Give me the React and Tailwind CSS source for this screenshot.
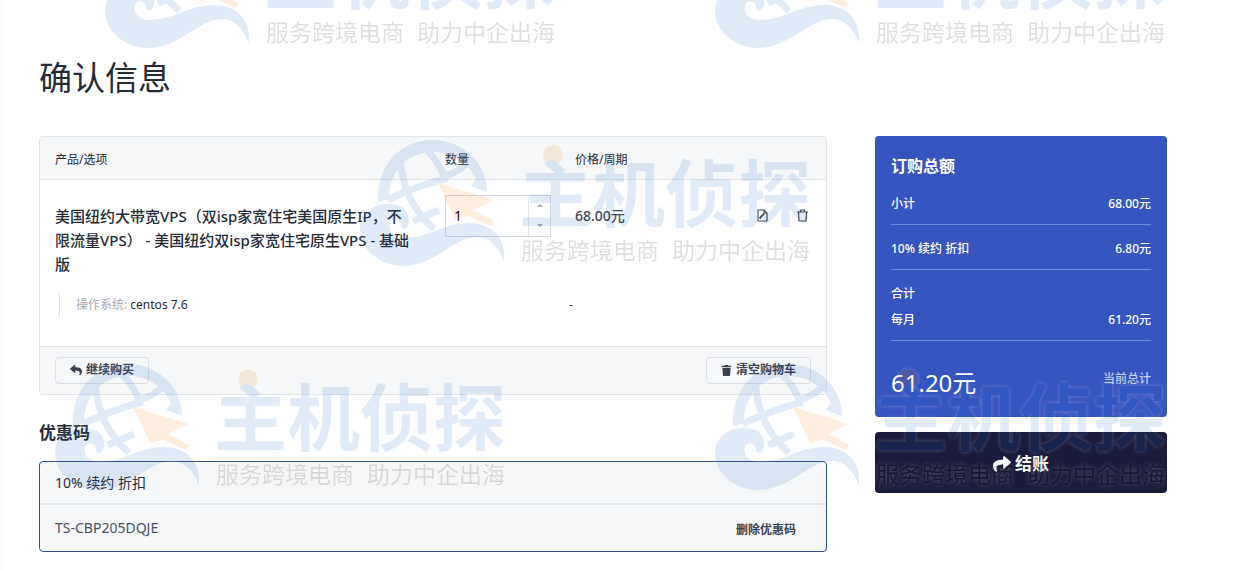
import { useState } from "react";
import { FaReply, FaShare, FaTrash } from "react-icons/fa";

const options = [{ label: "操作系统:", value: "centos 7.6", price: "-" }];

// top left corner of every repeated brand mark
const marks = [
	[100, -78],
	[710, -78],
	[355, 140],
	[50, 364],
	[710, 364],
];

function BrandMark({ x, y }) {
	return (
		<g transform={`translate(${x} ${y})`} filter="url(#mark)">
			<path
				d="M19 62C17 27 40 0 73 0C104 0 128 23 128 52L112 46L117 39C109 22 94 12 74 12C47 12 30 33 30 59Z"
				fill="#1468c8"
			/>
			<path
				d="M41 17C43 48 54 70 75 89M29 60C46 51 72 42 89 38M67 9C77 19 83 28 86 40M86 36C96 33 104 28 110 21M54 81L80 70"
				fill="none"
				stroke="#1468c8"
				strokeWidth="7"
			/>
			<path
				d="M50 83C52 70 42 64 29 64C12 64 1 75 1 89C1 110 22 126 44 126C76 126 95 97 118 97C131 97 139 107 145 121C147 98 133 83 110 83C84 83 70 98 46 98C34 98 29 90 31 83C33 78 40 78 42 84C41 90 48 91 50 83Z"
				fill="#1468c8"
			/>
			<path d="M79 43L135 60L114 70L135 81L132 86L109 76L96 79Z" fill="#f87c10" />
			<circle cx="194" cy="15" r="10" fill="#f87c10" />
			<text x="160" y="81" fontSize="73" fontWeight="700" fill="#1468c8">
				主机侦探
			</text>
			<text x="162" y="119" fontSize="23" fill="#000000">
				服务跨境电商
			</text>
			<text x="313" y="119" fontSize="23" fill="#000000">
				助力中企出海
			</text>
		</g>
	);
}

function Watermark() {
	return (
		<svg
			aria-hidden="true"
			className="pointer-events-none absolute inset-0 h-full w-full">
			<defs>
				{/* faint fill with a white glow that stays outside the shapes */}
				<filter id="mark" colorInterpolationFilters="sRGB">
					<feGaussianBlur in="SourceAlpha" stdDeviation="2" result="blurred" />
					<feFlood floodColor="#ffffff" floodOpacity="0.28" />
					<feComposite in2="blurred" operator="in" />
					<feComposite in2="SourceAlpha" operator="out" result="halo" />
					<feComponentTransfer in="SourceGraphic" result="tint">
						<feFuncA type="linear" slope="0.13" />
					</feComponentTransfer>
					<feMerge>
						<feMergeNode in="halo" />
						<feMergeNode in="tint" />
					</feMerge>
				</filter>
			</defs>
			{marks.map(([x, y]) => (
				<BrandMark key={`${x}-${y}`} x={x} y={y} />
			))}
		</svg>
	);
}

function EditIcon() {
	return (
		<svg width="11" height="13" viewBox="0 0 11 13" fill="none" stroke="currentColor">
			<path d="M1 1H7L10 4V12H1Z" strokeWidth="1.2" />
			<path d="M7 1V4H10" />
			<path d="M3 10L3.5 8L7.5 4.5" strokeWidth="1.8" />
		</svg>
	);
}

function BinIcon() {
	return (
		<svg width="11" height="13" viewBox="0 0 11 13" fill="none" stroke="currentColor">
			<path d="M0 3H11M3.5 3V1H7.5V3M1.5 3L2 12H9L9.5 3" strokeWidth="1.2" />
		</svg>
	);
}

function Quantity() {
	const [quantity, setQuantity] = useState("1");

	return (
		<div className="flex h-[42px] w-[106px] border border-[#d5d9dd]">
			<input
				type="text"
				aria-label="数量"
				className="min-w-0 flex-1 px-2 text-sm text-black outline-none"
				value={quantity}
				onChange={(event) => setQuantity(event.target.value)}
			/>
			<div className="flex w-[22px] flex-col border-l border-[#e3e5e8] text-[#a5aaaf]">
				<button
					type="button"
					aria-label="增加"
					className="flex flex-1 items-center justify-center"
					onClick={() => setQuantity(String(Number(quantity) + 1))}>
					<svg width="6" height="3" viewBox="0 0 6 3" fill="currentColor">
						<path d="M0 3L3 0L6 3Z" />
					</svg>
				</button>
				<button
					type="button"
					aria-label="减少"
					className="flex flex-1 items-center justify-center"
					onClick={() => setQuantity(String(Math.max(1, Number(quantity) - 1)))}>
					<svg width="6" height="3" viewBox="0 0 6 3" fill="currentColor">
						<path d="M0 0L3 3L6 0Z" />
					</svg>
				</button>
			</div>
		</div>
	);
}

function Cart() {
	return (
		<section className="overflow-hidden rounded border border-[#e2e5e8]">
			<table className="w-full table-fixed text-left">
				<thead className="bg-[#f5f7f9] text-xs">
					<tr className="h-[42px] border-b border-[#e2e5e8]">
						<th className="pt-1 pl-[15px] font-normal">产品/选项</th>
						<th className="w-[130px] pt-1 font-normal">数量</th>
						<th className="w-[130px] pt-1 font-normal">价格/周期</th>
						<th className="w-[121px]" aria-label="操作" />
					</tr>
				</thead>
				<tbody className="align-top">
					<tr>
						<td className="pt-6 pr-8 pl-[15px] text-[15px] leading-6 font-medium">
							美国纽约大带宽VPS（双isp家宽住宅美国原生IP，不限流量VPS） -
							美国纽约双isp家宽住宅原生VPS - 基础版
						</td>
						<td className="pt-[15px]">
							<Quantity />
						</td>
						<td className="pt-6 text-sm leading-6 font-medium text-[#3a4250]">
							68.00元
						</td>
						<td className="pt-6">
							<div className="flex h-6 items-center justify-end gap-[29px] pr-[18px] text-[#3a4250]">
								<button type="button" aria-label="编辑">
									<EditIcon />
								</button>
								<button type="button" aria-label="删除">
									<BinIcon />
								</button>
							</div>
						</td>
					</tr>
					{options.map((option) => (
						<tr key={option.label} className="text-xs leading-6">
							<td colSpan={2} className="pt-[17px] pb-[29px] pl-[19px]">
								<div className="border-l border-[#dcdfe3] pl-4">
									<span className="text-[#a3a8b0]">{option.label}</span>{" "}
									{option.value}
								</div>
							</td>
							<td colSpan={2} className="pt-[17px]">
								<span className="-ml-1.5">{option.price}</span>
							</td>
						</tr>
					))}
				</tbody>
			</table>
			<div className="flex justify-between border-t border-[#e2e5e8] bg-[#f5f7f9] px-[15px] py-2.5 text-xs font-bold text-[#3a4250]">
				<button
					type="button"
					className="flex h-[27px] items-center gap-1 rounded border border-[#dcdfe3] px-3.5">
					<FaReply size={12} />
					继续购买
				</button>
				<button
					type="button"
					className="flex h-[27px] items-center gap-1 rounded border border-[#dcdfe3] px-3.5">
					<FaTrash size={11} />
					清空购物车
				</button>
			</div>
		</section>
	);
}

function Coupon() {
	return (
		<section>
			<h2 className="mt-6 mb-[15px] text-[17px] leading-[27px] font-bold">
				优惠码
			</h2>
			<div className="rounded border border-[#34508f] bg-[#f5f7f9] text-sm">
				<p className="border-b-2 border-[#e4e7ea] px-[15px] pt-[11px] pb-2.5 leading-5">
					10% 续约 折扣
				</p>
				<div className="flex items-center justify-between py-3 pr-[30px] pl-[15px] leading-[22px] text-[#4a505c]">
					<span>TS-CBP205DQJE</span>
					<button type="button" className="pt-1 text-xs font-bold text-[#3a4250]">
						删除优惠码
					</button>
				</div>
			</div>
		</section>
	);
}

function Summary() {
	return (
		<aside className="w-[292px] shrink-0">
			<section className="rounded bg-[#3555bf] p-4 text-xs leading-5 font-medium text-white">
				<h2 className="mb-[13px] text-base leading-7 font-bold">订购总额</h2>
				<div className="flex justify-between border-b border-[#6e88d8] pt-px pb-2.5">
					<span>小计</span>
					<span>68.00元</span>
				</div>
				<div className="flex justify-between border-b border-[#6e88d8] pt-3.5 pb-2.5">
					<span>10% 续约 折扣</span>
					<span>6.80元</span>
				</div>
				<div className="border-b border-[#6e88d8] pt-3.5 pb-2.5">
					<p>合计</p>
					<div className="mt-1.5 flex justify-between">
						<span>每月</span>
						<span>61.20元</span>
					</div>
				</div>
				<div className="mt-6 flex justify-between">
					<span className="text-2xl leading-9 font-normal">61.20元</span>
					<span className="pt-1 text-[#c3cdf0]">当前总计</span>
				</div>
			</section>
			<button
				type="button"
				className="mt-[15px] flex h-[61px] w-full items-center justify-center gap-1 rounded bg-[#1b1c3b] pt-0.5 text-[17px] font-bold text-white">
				<FaShare size={18} />
				结账
			</button>
		</aside>
	);
}

export default function App() {
	return (
		<div className="relative min-h-screen overflow-hidden border-l-4 border-[#fafafa] bg-white pb-[18px] font-['Noto_Sans','Noto_Sans_CJK_SC',sans-serif] text-[#252b37]">
			<main className="pr-[89px] pl-[35px]">
				<h1 className="pt-[54px] pb-[34px] text-[33px] leading-[48px] font-normal">
					确认信息
				</h1>
				<div className="flex items-start gap-12">
					<div className="min-w-0 flex-1">
						<Cart />
						<Coupon />
					</div>
					<Summary />
				</div>
			</main>
			<Watermark />
		</div>
	);
}
